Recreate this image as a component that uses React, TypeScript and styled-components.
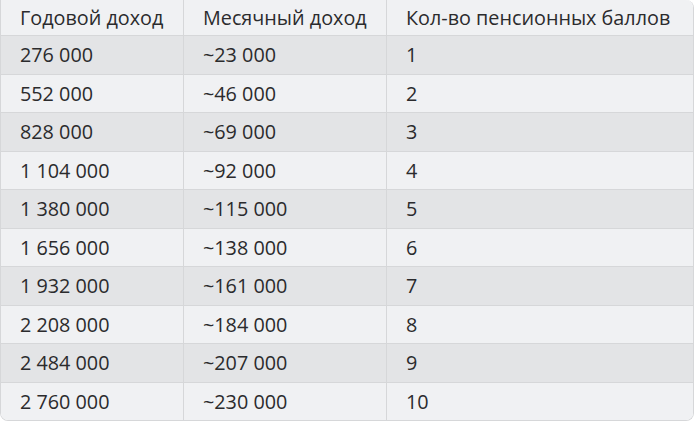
import React from "react";
import styled, { createGlobalStyle } from "styled-components";

const GlobalStyle = createGlobalStyle`
  html, body {
    margin: 0;
    padding: 0;
    background: #ffffff;
  }
`;

const Wrap = styled.div`
  width: 694px;
  height: 421px;
  overflow: hidden;
`;

const Table = styled.table`
  width: 100%;
  border-collapse: separate;
  border-spacing: 0;
  border: 1px solid #d6d7d9;
  border-top: 0;
  border-radius: 0 8px 8px 8px;
  overflow: hidden;
  box-sizing: border-box;
  font-family: "Open Sans", "Noto Sans", sans-serif;
  font-size: 19.8px;
  color: #2b2b2d;
`;

const Row = styled.tr<{ $dark?: boolean }>`
  background: ${(p) => (p.$dark ? "#e3e4e6" : "#f0f1f3")};
`;

const HeadCell = styled.th`
  height: 35px;
  padding: 0 19px;
  text-align: left;
  font-weight: 400;
  border-bottom: 1px solid #d6d7d9;
  border-right: 1px solid #d6d7d9;
  white-space: nowrap;
  &:last-child {
    border-right: 0;
  }
`;

const Cell = styled.td`
  height: 37.5px;
  padding: 0 19px;
  border-bottom: 1px solid #d6d7d9;
  border-right: 1px solid #d6d7d9;
  white-space: nowrap;
  &:last-child {
    border-right: 0;
  }
  tr:last-child & {
    border-bottom: 0;
  }
`;

const rows = [
  ["276 000", "~23 000", "1"],
  ["552 000", "~46 000", "2"],
  ["828 000", "~69 000", "3"],
  ["1 104 000", "~92 000", "4"],
  ["1 380 000", "~115 000", "5"],
  ["1 656 000", "~138 000", "6"],
  ["1 932 000", "~161 000", "7"],
  ["2 208 000", "~184 000", "8"],
  ["2 484 000", "~207 000", "9"],
  ["2 760 000", "~230 000", "10"],
];

export default function App() {
  return (
    <Wrap>
      <GlobalStyle />
      <Table>
        <colgroup>
          <col style={{ width: 183 }} />
          <col style={{ width: 203 }} />
          <col />
        </colgroup>
        <thead>
          <Row>
            <HeadCell>Годовой доход</HeadCell>
            <HeadCell>Месячный доход</HeadCell>
            <HeadCell>Кол-во пенсионных баллов</HeadCell>
          </Row>
        </thead>
        <tbody>
          {rows.map((r, i) => (
            <Row key={i} $dark={i % 2 === 0}>
              <Cell>{r[0]}</Cell>
              <Cell>{r[1]}</Cell>
              <Cell>{r[2]}</Cell>
            </Row>
          ))}
        </tbody>
      </Table>
    </Wrap>
  );
}
